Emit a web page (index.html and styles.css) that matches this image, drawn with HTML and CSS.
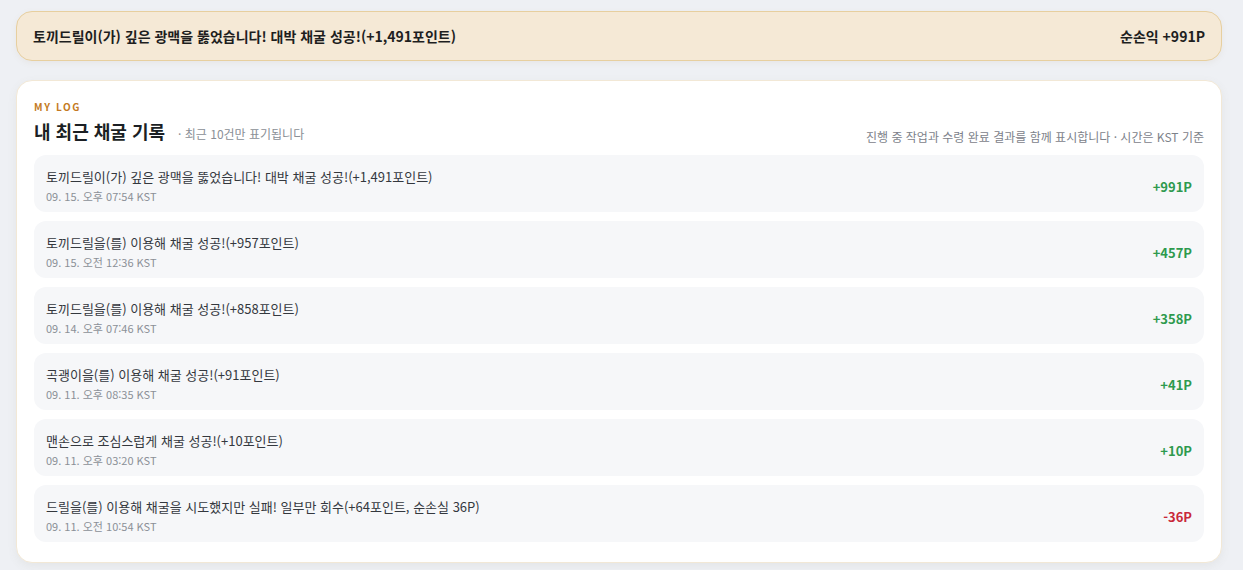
FILE: index.html
```html
<!DOCTYPE html>
<html lang="ko">
<head>
  <meta charset="UTF-8">
  <meta name="viewport" content="width=device-width, initial-scale=1">
  <title>내 최근 채굴 기록</title>
  <link rel="stylesheet" href="styles.css">
</head>
<body>

  <!-- 최근 결과 알림 -->
  <div class="notice">
    <span>토끼드릴이(가) 깊은 광맥을 뚫었습니다! 대박 채굴 성공!(+1,491포인트)</span>
    <span>순손익 +991P</span>
  </div>

  <!-- 채굴 기록 -->
  <section class="card">
    <div class="eyebrow">MY LOG</div>
    <div class="card-head">
      <h2>내 최근 채굴 기록 <small>· 최근 10건만 표기됩니다</small></h2>
      <p class="hint">진행 중 작업과 수령 완료 결과를 함께 표시합니다 · 시간은 KST 기준</p>
    </div>

    <ul class="log-list">
      <li class="log-item">
        <div>
          <div class="log-title">토끼드릴이(가) 깊은 광맥을 뚫었습니다! 대박 채굴 성공!(+1,491포인트)</div>
          <div class="log-time">09. 15. 오후 07:54 KST</div>
        </div>
        <span class="amount plus">+991P</span>
      </li>
      <li class="log-item">
        <div>
          <div class="log-title">토끼드릴을(를) 이용해 채굴 성공!(+957포인트)</div>
          <div class="log-time">09. 15. 오전 12:36 KST</div>
        </div>
        <span class="amount plus">+457P</span>
      </li>
      <li class="log-item">
        <div>
          <div class="log-title">토끼드릴을(를) 이용해 채굴 성공!(+858포인트)</div>
          <div class="log-time">09. 14. 오후 07:46 KST</div>
        </div>
        <span class="amount plus">+358P</span>
      </li>
      <li class="log-item">
        <div>
          <div class="log-title">곡괭이을(를) 이용해 채굴 성공!(+91포인트)</div>
          <div class="log-time">09. 11. 오후 08:35 KST</div>
        </div>
        <span class="amount plus">+41P</span>
      </li>
      <li class="log-item">
        <div>
          <div class="log-title">맨손으로 조심스럽게 채굴 성공!(+10포인트)</div>
          <div class="log-time">09. 11. 오후 03:20 KST</div>
        </div>
        <span class="amount plus">+10P</span>
      </li>
      <li class="log-item">
        <div>
          <div class="log-title">드릴을(를) 이용해 채굴을 시도했지만 실패! 일부만 회수(+64포인트, 순손실 36P)</div>
          <div class="log-time">09. 11. 오전 10:54 KST</div>
        </div>
        <span class="amount minus">-36P</span>
      </li>
    </ul>
  </section>

</body>
</html>
```

FILE: styles.css
```css
body {
  margin: 0;
  padding: 11px 21px 20px 16px;
  background: #eef0f4;
  color: #1f2329;
  font-family: "Noto Sans CJK KR", "Noto Sans", sans-serif;
}

/* 상단 알림 */
.notice {
  display: flex;
  justify-content: space-between;
  align-items: center;
  height: 48px;
  padding: 0 16px;
  background: #f5e9d6;
  border: 1px solid #e7cf9f;
  border-radius: 16px;
  font-size: 14px;
  font-weight: 700;
  color: #1e1e1e;
  box-shadow: 0 2px 6px rgba(160, 130, 80, 0.08);
}

/* 기록 카드 */
.card {
  margin-top: 19px;
  padding: 19px 17px 20px;
  background: #fff;
  border: 1px solid #f2e8d6;
  border-radius: 16px;
  box-shadow: 0 3px 10px rgba(120, 110, 90, 0.08);
}
.eyebrow {
  font-size: 10px;
  font-weight: 700;
  letter-spacing: 1.6px;
  color: #c47a22;
  line-height: 14px;
}
.card-head {
  display: flex;
  justify-content: space-between;
  align-items: flex-end;
  margin-top: 4px;
  margin-bottom: 8px;
}
.card-head h2 {
  margin: 0;
  font-size: 18px;
  line-height: 26px;
  font-weight: 700;
  color: #1b1f24;
}
.card-head h2 small {
  margin-left: 8px;
  font-size: 12px;
  font-weight: 400;
  color: #8a8f96;
}
.hint {
  margin: 0;
  font-size: 12px;
  line-height: 20px;
  color: #7d828a;
}

.log-list {
  list-style: none;
  margin: 0;
  padding: 0;
  display: flex;
  flex-direction: column;
  gap: 9px;
}
.log-item {
  display: flex;
  justify-content: space-between;
  align-items: center;
  height: 57px;
  box-sizing: border-box;
  padding: 3px 12px 0;
  background: #f6f7f9;
  border-radius: 12px;
}
.log-title {
  font-size: 13px;
  line-height: 19px;
  color: #34383e;
}
.log-time {
  margin-top: 2px;
  font-size: 11px;
  line-height: 16px;
  color: #8b9097;
}
.amount {
  font-size: 13px;
  font-weight: 700;
  margin-top: 2px;
}
.plus {
  color: #2e9a4e;
}
.minus {
  color: #c9283a;
}
```
